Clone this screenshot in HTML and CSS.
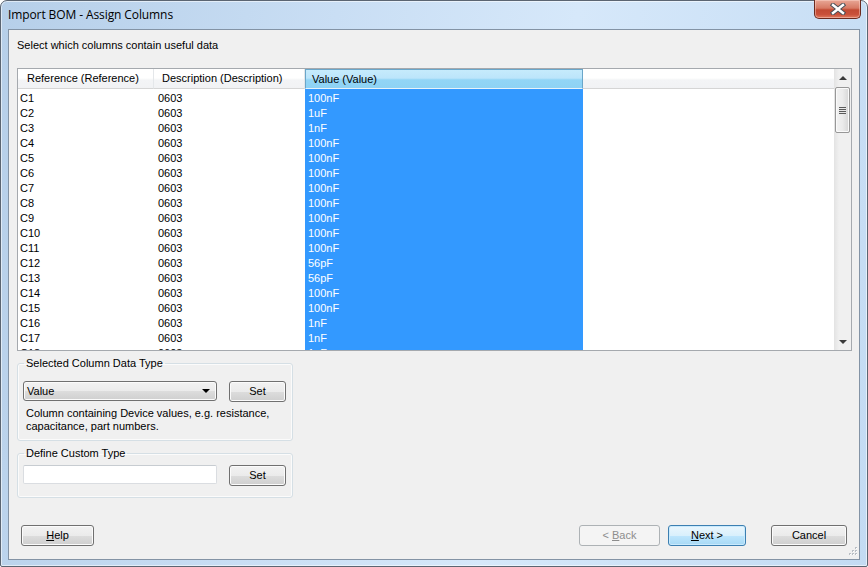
FILE: index.html
```html
<!DOCTYPE html>
<html>
<head>
<meta charset="utf-8">
<link rel="stylesheet" href="styles.css">
</head>
<body>
<div class="window">
  <div class="titlebar">
    <span class="title">Import BOM - Assign Columns</span>
    <div class="close-btn">
      <svg width="16" height="12" viewBox="0 0 16 12">
        <path d="M3 2 L13 10 M13 2 L3 10" stroke="#4a5058" stroke-width="4.4" stroke-linecap="square" fill="none"/>
        <path d="M3 2 L13 10 M13 2 L3 10" stroke="#ffffff" stroke-width="2.4" stroke-linecap="square" fill="none"/>
      </svg>
    </div>
  </div>
  <div class="client">
    <p class="intro">Select which columns contain useful data</p>
    <div class="list">
      <div class="list-main">
        <div class="list-head">
          <div class="hcell col1">Reference (Reference)</div>
          <div class="hcell col2">Description (Description)</div>
          <div class="hcell col3 hot">Value (Value)</div>
          <div class="hcell fill"></div>
        </div>
        <div class="list-rows">
          <div class="row"><span class="cell col1">C1</span><span class="cell col2">0603</span><span class="cell col3 sel">100nF</span></div>
          <div class="row"><span class="cell col1">C2</span><span class="cell col2">0603</span><span class="cell col3 sel">1uF</span></div>
          <div class="row"><span class="cell col1">C3</span><span class="cell col2">0603</span><span class="cell col3 sel">1nF</span></div>
          <div class="row"><span class="cell col1">C4</span><span class="cell col2">0603</span><span class="cell col3 sel">100nF</span></div>
          <div class="row"><span class="cell col1">C5</span><span class="cell col2">0603</span><span class="cell col3 sel">100nF</span></div>
          <div class="row"><span class="cell col1">C6</span><span class="cell col2">0603</span><span class="cell col3 sel">100nF</span></div>
          <div class="row"><span class="cell col1">C7</span><span class="cell col2">0603</span><span class="cell col3 sel">100nF</span></div>
          <div class="row"><span class="cell col1">C8</span><span class="cell col2">0603</span><span class="cell col3 sel">100nF</span></div>
          <div class="row"><span class="cell col1">C9</span><span class="cell col2">0603</span><span class="cell col3 sel">100nF</span></div>
          <div class="row"><span class="cell col1">C10</span><span class="cell col2">0603</span><span class="cell col3 sel">100nF</span></div>
          <div class="row"><span class="cell col1">C11</span><span class="cell col2">0603</span><span class="cell col3 sel">100nF</span></div>
          <div class="row"><span class="cell col1">C12</span><span class="cell col2">0603</span><span class="cell col3 sel">56pF</span></div>
          <div class="row"><span class="cell col1">C13</span><span class="cell col2">0603</span><span class="cell col3 sel">56pF</span></div>
          <div class="row"><span class="cell col1">C14</span><span class="cell col2">0603</span><span class="cell col3 sel">100nF</span></div>
          <div class="row"><span class="cell col1">C15</span><span class="cell col2">0603</span><span class="cell col3 sel">100nF</span></div>
          <div class="row"><span class="cell col1">C16</span><span class="cell col2">0603</span><span class="cell col3 sel">1nF</span></div>
          <div class="row"><span class="cell col1">C17</span><span class="cell col2">0603</span><span class="cell col3 sel">1nF</span></div>
          <div class="row"><span class="cell col1">C18</span><span class="cell col2">0603</span><span class="cell col3 sel">1nF</span></div>
        </div>
      </div>
      <div class="vscroll">
        <div class="sb-btn"><span class="tri-up"></span></div>
        <div class="sb-track">
          <div class="sb-thumb"><span class="grip-lines"></span></div>
        </div>
        <div class="sb-btn"><span class="tri-down"></span></div>
      </div>
    </div>

    <fieldset class="group group-type">
      <legend>Selected Column Data Type</legend>
      <div class="group-row">
        <div class="combo"><span>Value</span><span class="combo-arrow"></span></div>
        <div class="btn btn-set"><span>Set</span></div>
      </div>
      <p class="hint">Column containing Device values, e.g. resistance,<br>capacitance, part numbers.</p>
    </fieldset>

    <fieldset class="group group-custom">
      <legend>Define Custom Type</legend>
      <div class="group-row">
        <div class="textbox"></div>
        <div class="btn btn-set"><span>Set</span></div>
      </div>
    </fieldset>

    <div class="buttons">
      <div class="btn btn-help"><span><u>H</u>elp</span></div>
      <div class="btn btn-back disabled"><span>&lt; <u>B</u>ack</span></div>
      <div class="btn btn-next default"><span><u>N</u>ext &gt;</span></div>
      <div class="btn btn-cancel"><span>Cancel</span></div>
    </div>
    <div class="grip">
      <svg width="11" height="11" viewBox="0 0 11 11">
        <g fill="#b9bec4">
          <rect x="8" y="0" width="2" height="2"/>
          <rect x="5" y="3" width="2" height="2"/><rect x="8" y="3" width="2" height="2"/>
          <rect x="2" y="6" width="2" height="2"/><rect x="5" y="6" width="2" height="2"/><rect x="8" y="6" width="2" height="2"/>
        </g>
        <g fill="#ffffff">
          <rect x="9" y="1" width="1" height="1"/>
          <rect x="6" y="4" width="1" height="1"/><rect x="9" y="4" width="1" height="1"/>
          <rect x="3" y="7" width="1" height="1"/><rect x="6" y="7" width="1" height="1"/><rect x="9" y="7" width="1" height="1"/>
        </g>
      </svg>
    </div>
  </div>
</div>
</body>
</html>
```

FILE: styles.css
```css
* { box-sizing: border-box; }
html, body { margin: 0; padding: 0; }
body {
  width: 868px;
  height: 567px;
  overflow: hidden;
  font-family: "Liberation Sans", Arial, sans-serif;
  font-size: 11px;
  color: #000;
  background: #ffffff;
}
.window {
  width: 868px;
  height: 567px;
  border: 1px solid #5b6572;
  border-radius: 7px 7px 2px 2px;
  background: linear-gradient(100deg, #b6cfe9 0%, #c9def4 35%, #d6e8fa 60%, #c3dbf3 100%);
  display: flex;
  flex-direction: column;
  padding: 0 7px 6px 7px;
  box-shadow: inset 0 0 0 1px rgba(255,255,255,0.55);
}
.titlebar {
  height: 28px;
  display: flex;
  align-items: flex-start;
  flex: none;
}
.title {
  font-family: "Open Sans", "Noto Sans", sans-serif;
  font-size: 12px;
  line-height: 16px;
  padding-top: 6px;
  color: #000;
  letter-spacing: -0.1px;
}
.close-btn {
  margin-left: auto;
  margin-right: -1px;
  width: 47px;
  height: 19px;
  margin-top: -1px;
  border: 1px solid #6b2a1f;
  border-top: none;
  border-radius: 0 0 5px 5px;
  background: linear-gradient(180deg, #e8a796 0%, #d77a64 45%, #c24a33 55%, #c9503a 80%, #e07a5e 100%);
  box-shadow: inset 0 0 0 1px rgba(255,220,210,0.45);
  display: flex;
  align-items: center;
  justify-content: center;
}
.close-btn svg { display: block; }

.client {
  position: relative;
  flex: 1;
  background: #f0f0f0;
  border: 1px solid #8393a5;
  display: flex;
  flex-direction: column;
  padding: 9px 7px 13px 8px;
}
.intro {
  margin: 0;
  line-height: 13px;
}
.list {
  margin-top: 16px;
  height: 283px;
  border: 1px solid #a5a9ae;
  background: #fff;
  display: flex;
  flex: none;
}
.list-main {
  flex: 1;
  overflow: hidden;
  display: flex;
  flex-direction: column;
}
.list-head {
  display: flex;
  height: 20px;
  flex: none;
  background: linear-gradient(180deg, #ffffff 0%, #ffffff 45%, #f3f4f6 55%, #f1f2f4 100%);
}
.hcell {
  height: 20px;
  line-height: 19px;
  padding-left: 9px;
  border-right: 1px solid #e4e7ea;
  border-bottom: 1px solid #d5d5d5;
  white-space: nowrap;
}
.hcell.col1 { width: 136px; }
.hcell.col2 { width: 151px; padding-left: 8px; }
.hcell.col3 { width: 278px; padding-left: 6px; }
.hcell.fill { flex: 1; border-right: none; }
.hcell.hot {
  background: linear-gradient(180deg, #c6ebfc 0%, #bce5fb 45%, #92d5f6 55%, #8ed2f4 100%);
  border: 1px solid #6aa6c9;
  border-bottom: 1px solid #e6f2fa;
}
.list-rows {
  flex: 1;
  overflow: hidden;
}
.row {
  display: flex;
  height: 15px;
}
.cell {
  display: block;
  height: 15px;
  line-height: 12px;
  padding-top: 3px;
  white-space: nowrap;
}
.cell.col1 { width: 136px; padding-left: 2px; }
.cell.col2 { width: 151px; padding-left: 4px; }
.cell.col3 { width: 278px; padding-left: 3px; }
.cell.sel { background: #3399ff; color: #fff; }

.vscroll {
  width: 17px;
  flex: none;
  display: flex;
  flex-direction: column;
  background: linear-gradient(90deg, #e3e3e3 0%, #f0f0f0 30%, #f0f0f0 100%);
}
.sb-btn {
  height: 17px;
  display: flex;
  align-items: center;
  justify-content: center;
  flex: none;
}
.tri-up, .tri-down {
  width: 0; height: 0;
  border-left: 4px solid transparent;
  border-right: 4px solid transparent;
}
.tri-up { border-bottom: 4px solid #3a3a3a; }
.tri-down { border-top: 4px solid #3a3a3a; }
.sb-track { flex: 1; padding: 1px 1px 0 1px; }
.sb-thumb {
  height: 46px;
  border: 1px solid #979797;
  border-radius: 2px;
  background: linear-gradient(90deg, #f2f2f2 0%, #ebebeb 50%, #d6d6d6 100%);
  box-shadow: inset 0 0 0 1px #fafafa;
  display: flex;
  align-items: center;
  justify-content: center;
}
.grip-lines {
  width: 7px;
  height: 7px;
  background: repeating-linear-gradient(180deg, #5a5a5a 0px, #5a5a5a 1px, #e8e8e8 1px, #e8e8e8 2px);
}

.group {
  margin: 6px 0 0 0;
  width: 276px;
  border: 1px solid #d5dfe5;
  border-radius: 3px;
  padding: 0 5px;
  min-width: 0;
  box-shadow: inset 0 0 0 1px rgba(255,255,255,0.7);
}
.group legend {
  padding: 0 2px;
  margin-left: 1px;
  line-height: 13px;
}
.group-type { padding-top: 11px; padding-bottom: 7px; }
.group-custom { padding-top: 5px; padding-bottom: 11px; }
.group-row {
  display: flex;
  align-items: flex-start;
  gap: 12px;
}
.combo {
  width: 194px;
  height: 20px;
  border: 1px solid #707070;
  border-radius: 3px;
  background: linear-gradient(180deg, #f2f2f2 0%, #ebebeb 50%, #dddddd 51%, #cfcfcf 100%);
  box-shadow: inset 0 0 0 1px #fbfbfb;
  display: flex;
  align-items: center;
  padding: 0 6px 0 3px;
  line-height: 18px;
}
.combo-arrow {
  margin-left: auto;
  width: 0; height: 0;
  border-left: 4px solid transparent;
  border-right: 4px solid transparent;
  border-top: 4px solid #000;
}
.textbox {
  width: 194px;
  height: 19px;
  border: 1px solid #dadde1;
  border-top-color: #c7ccd1;
  border-radius: 2px;
  background: #fff;
}
.hint {
  margin: 5px 0 0 3px;
  line-height: 13px;
}

.btn {
  height: 21px;
  border: 1px solid #707070;
  border-radius: 3px;
  background: linear-gradient(180deg, #f2f2f2 0%, #ebebeb 50%, #dddddd 51%, #cfcfcf 100%);
  box-shadow: inset 0 0 0 1px #fbfbfb;
  display: flex;
  align-items: center;
  justify-content: center;
  line-height: 13px;
  flex: none;
  white-space: pre;
}
.btn-set { width: 57px; }
.buttons {
  margin-top: auto;
  display: flex;
  align-items: flex-start;
  padding: 0 5px 0 4px;
}
.btn-help { width: 73px; }
.btn-back { width: 81px; margin-left: auto; }
.btn-next { width: 78px; margin-left: 8px; }
.btn-cancel { width: 76px; margin-left: 25px; }
.btn.disabled {
  color: #8d8d8d;
  border-color: #adb2b5;
  background: #f4f4f4;
  box-shadow: none;
}
.btn.default {
  border-color: #3c7fb1;
  background: linear-gradient(180deg, #eaf6fd 0%, #d9f0fc 50%, #bee6fd 51%, #a7d9f5 100%);
  box-shadow: inset 0 0 0 1px #c9eafd;
}
.btn u { text-decoration: underline; text-underline-offset: 1px; }
.grip {
  position: absolute;
  right: 1px;
  bottom: 1px;
  width: 11px;
  height: 11px;
}
.grip svg { display: block; }
```
